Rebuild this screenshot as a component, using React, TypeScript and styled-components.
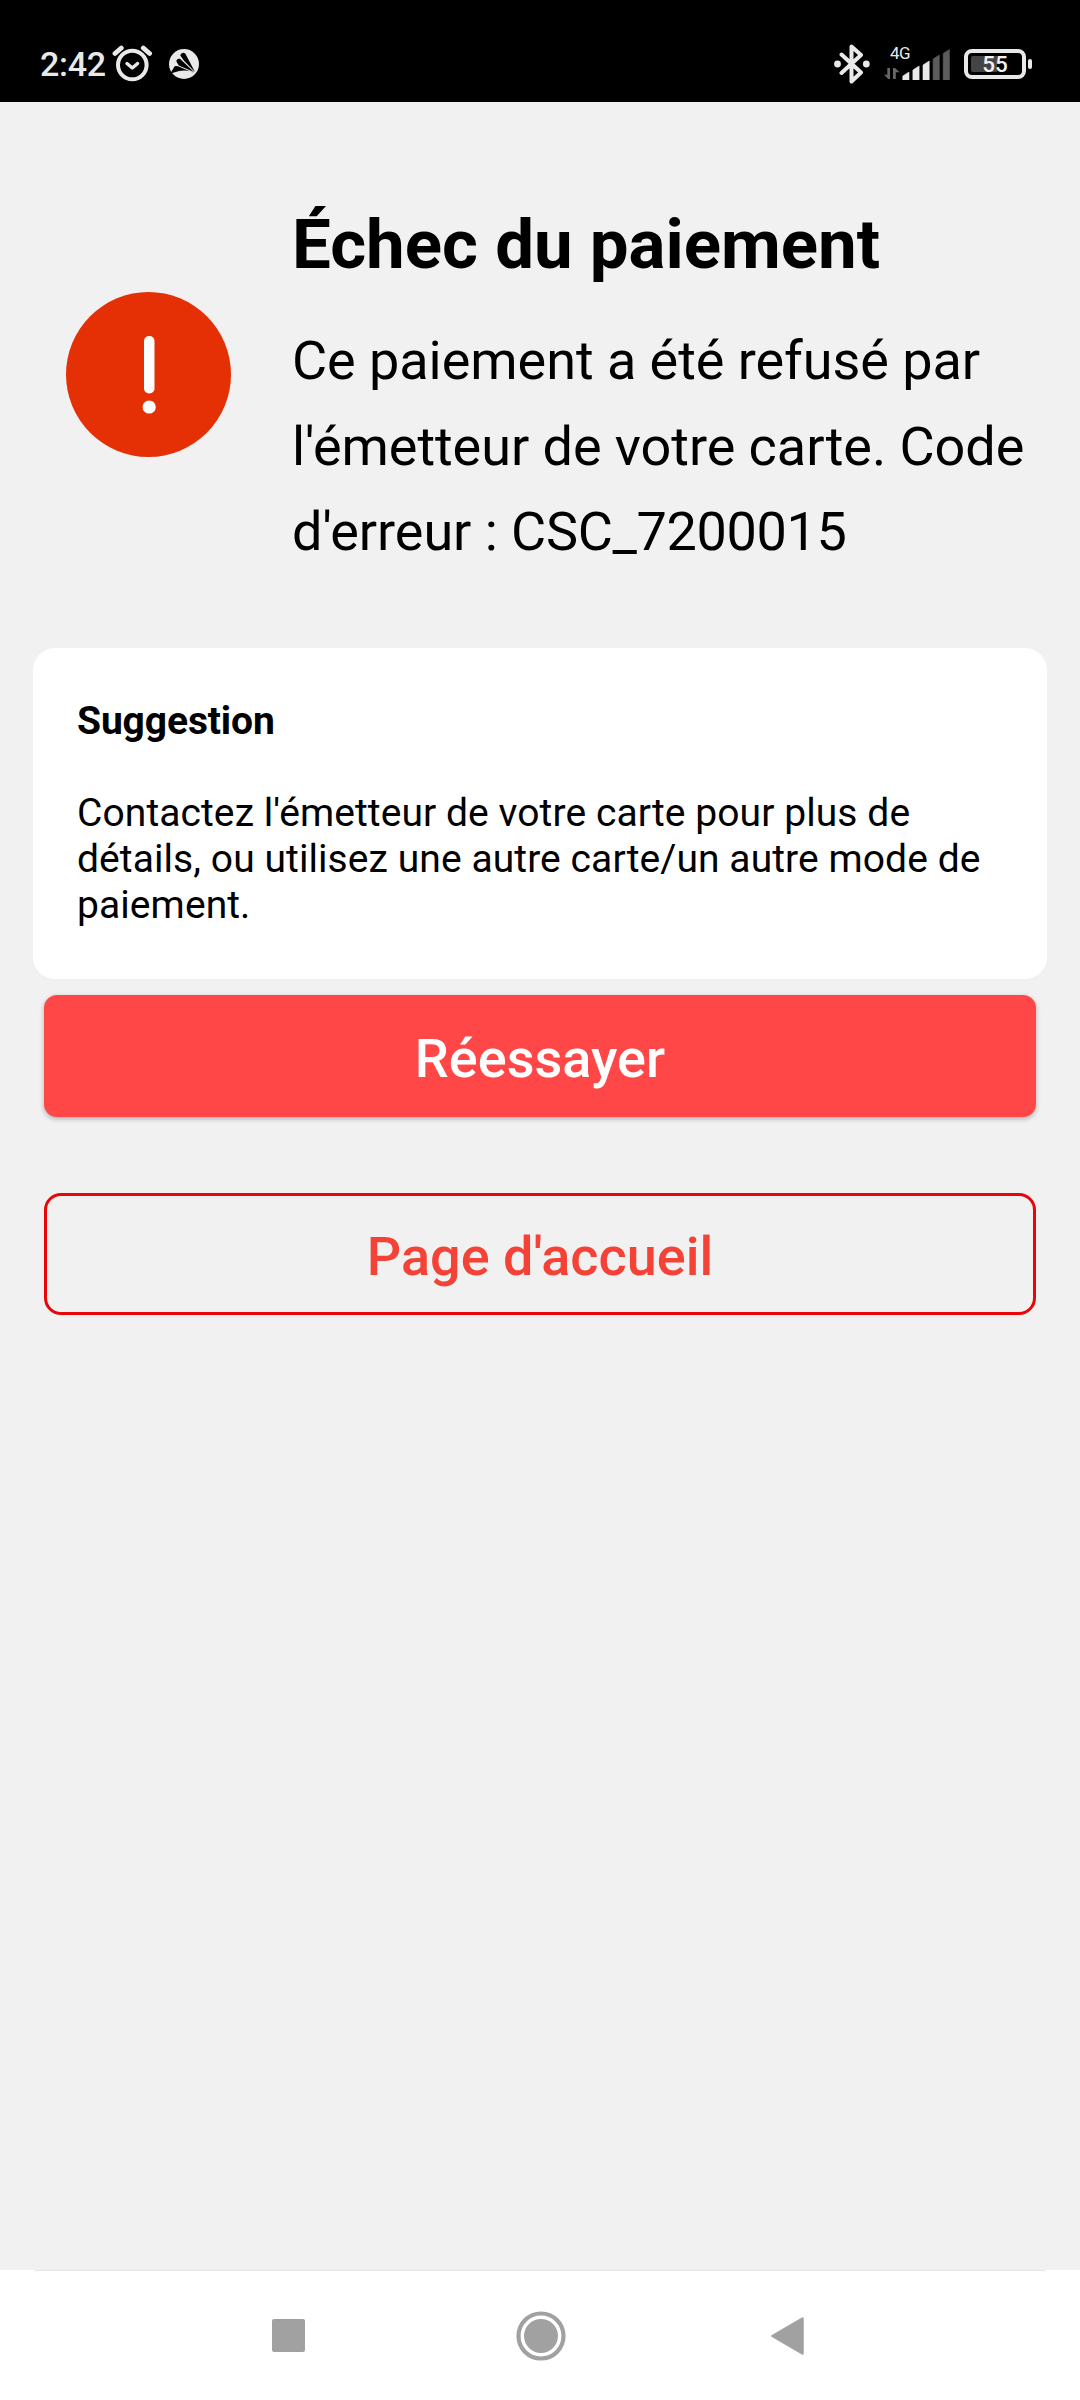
import React from "react";
import styled, { createGlobalStyle } from "styled-components";

const GlobalStyle = createGlobalStyle`
  *, *::before, *::after { box-sizing: border-box; }
  html, body { margin: 0; padding: 0; background: #f1f1f1; }
  body { font-family: Roboto, "Noto Sans", sans-serif; color: #000; }
  h1, h2, p { margin: 0; }
`;

const Screen = styled.div`
  width: 1080px;
  height: 2400px;
  display: flex;
  flex-direction: column;
  background: #f1f1f1;
  overflow: hidden;
`;

const StatusBar = styled.header`
  height: 102px;
  flex: none;
  display: flex;
  justify-content: space-between;
  align-items: flex-start;
  padding: 42px 48px 0 40px;
  background: #000;
  color: #e9e9e9;
`;

const StatusGroup = styled.div`
  display: flex;
  align-items: center;
  height: 44px;
`;

const Clock = styled.span`
  width: 72px;
  font-size: 34px;
  line-height: 44px;
  font-weight: 500;
  letter-spacing: -0.3px;
`;

const StatusIcon = styled.svg<{ $gap?: number }>`
  display: block;
  flex: none;
  margin-left: ${(p) => p.$gap ?? 0}px;
`;

/* The label spans both columns so it can sit over the short first bars. */
const Network = styled.div`
  display: grid;
  grid-template-columns: 18px 48px;
  grid-template-rows: 11px 21px;
  margin-left: 14px;
`;

const NetworkLabel = styled.span`
  grid-area: 1 / 1 / 2 / 3;
  padding-left: 6px;
  font-size: 17px;
  line-height: 11px;
  letter-spacing: -0.6px;
`;

const ArrowsIcon = styled.svg`
  grid-area: 2 / 1;
  align-self: end;
  margin-bottom: 1px;
`;

const BarsIcon = styled.svg`
  grid-area: 1 / 2 / 3 / 3;
`;

const Battery = styled.div`
  display: flex;
  align-items: center;
  margin-left: 14px;
`;

const BatteryShell = styled.div`
  width: 62px;
  height: 30px;
  padding: 3px;
  border: 4px solid #e9e9e9;
  border-radius: 8px;
`;

const BatteryLevel = styled.div<{ $level: number }>`
  height: 16px;
  display: flex;
  justify-content: center;
  border-radius: 2px;
  background: linear-gradient(to right, #444 ${(p) => p.$level}%, transparent ${(p) => p.$level}%);
  font-size: 22.5px;
  line-height: 17px;
  font-weight: 500;
  color: #f1f1f1;
`;

const BatteryTip = styled.div`
  width: 4px;
  height: 10px;
  margin-left: 2px;
  border-radius: 2px;
  background: #e9e9e9;
`;

const Content = styled.main`
  flex: 1;
  display: flex;
  flex-direction: column;
  padding: 102px 33px 0;
`;

const Failure = styled.section`
  display: flex;
  align-items: flex-start;
  height: 444px;
  padding-left: 33px;
`;

const FailureIcon = styled.svg`
  flex: none;
  margin-top: 88px;
  margin-right: 61px;
`;

const FailureText = styled.div`
  flex: 1;
`;

const Title = styled.h1`
  font-size: 69px;
  line-height: 82px;
  font-weight: 700;
  white-space: nowrap;
`;

const Message = styled.p`
  margin-top: 32px;
  font-size: 54px;
  line-height: 85.5px;
  letter-spacing: -0.05px;
  white-space: nowrap;
`;

const ErrorCode = styled.span`
  letter-spacing: -0.33px;
`;

const Card = styled.section`
  height: 331px;
  padding: 50px 44px 0;
  border-radius: 22px;
  background: #fff;
`;

const CardTitle = styled.h2`
  font-size: 39px;
  line-height: 46px;
  font-weight: 700;
  letter-spacing: -0.12px;
`;

const CardText = styled.p`
  margin-top: 46px;
  font-size: 39px;
  line-height: 46px;
  letter-spacing: 0.08px;
  white-space: nowrap;
`;

const Actions = styled.div`
  display: flex;
  flex-direction: column;
  gap: 76px;
  padding: 16px 11px 0;
`;

const Button = styled.button<{ $outlined?: boolean }>`
  height: 122px;
  padding: 5px 0 0;
  font-family: inherit;
  font-size: 54px;
  line-height: 64px;
  font-weight: 500;
  border: ${(p) => (p.$outlined ? "3px solid #ea0509" : "0")};
  border-radius: ${(p) => (p.$outlined ? 17 : 13)}px;
  color: ${(p) => (p.$outlined ? "#f44336" : "#fff")};
  background: ${(p) => (p.$outlined ? "transparent" : "#ff4747")};
  box-shadow: ${(p) => (p.$outlined ? "none" : "0 2px 5px rgba(0, 0, 0, 0.28)")};
`;

const NavBar = styled.nav`
  flex: none;
  height: 130px;
  display: flex;
  flex-direction: column;
  align-items: center;
  background: #fff;
`;

const NavEdge = styled.div`
  width: 1010px;
  height: 1px;
  background: #e4e4e4;
`;

const NavItems = styled.div`
  width: 100%;
  display: flex;
  align-items: center;
  gap: 211px;
  padding-left: 271.5px;
  height: 129px;
`;

const BackIcon = styled.svg`
  margin-left: -6px;
`;

const AlarmIcon = () => (
  <StatusIcon width="42" height="42" viewBox="0 0 42 42" fill="none" stroke="#e9e9e9" strokeWidth="4" strokeLinecap="round" strokeLinejoin="round">
    <circle cx="20.3" cy="22" r="14.3" />
    <path d="M3 10.5 9.3 5M31.3 5l6.3 5.5" strokeWidth="4.8" />
    <path d="m15 20.5 5.3 4.5 5.3-4.5" strokeWidth="3.4" />
  </StatusIcon>
);

const FanIcon = () => (
  <StatusIcon $gap={14} width="32" height="32" viewBox="0 0 32 32">
    <circle cx="16" cy="16" r="15" fill="#e9e9e9" />
    <path d="M12.3 7.5c1-3.6 5-3.5 6 0L27 24 16 12.8 12.3 7.5Z" fill="#000" />
    <path d="M8.4 13.6c0-3 3.2-3.7 5.1-1.4L26 24 10.8 17.5Z" fill="#000" />
    <path d="M5.7 20c.5-2.4 3-2.4 5-1.6L27 25.5C21 21.8 14 21.5 6 24.5L3 25.5 3.6 23.2Z" fill="#000" />
  </StatusIcon>
);

const BluetoothIcon = () => (
  <StatusIcon width="36" height="40" viewBox="0 0 36 40" fill="none" stroke="#e9e9e9" strokeWidth="4" strokeLinecap="round" strokeLinejoin="round">
    <path d="m7.5 10.500 19.500 18-9.500 9V2.500l9.500 8.500L7.500 29" />
    <circle cx="3.500" cy="20" r="3.400" fill="#e9e9e9" stroke="none" />
    <circle cx="32.300" cy="20" r="3.400" fill="#e9e9e9" stroke="none" />
  </StatusIcon>
);

const DataArrows = () => (
  <ArrowsIcon width="16" height="11" viewBox="0 0 16 11" fill="#666">
    <path d="M3.300 0H6v11H4.200L0 6.800h3.300ZM9 11V0h2l4.600 4.200h-3.800V11Z" />
  </ArrowsIcon>
);

const BARS = [8, 14, 19, 25, 30.5];

const SignalBars = () => (
  <BarsIcon width="48" height="32" viewBox="0 0 48 32">
    {BARS.map((h, i) => (
      <path
        key={h}
        d={`M${0.8 + i * 10.1} 32V${32 - h + 4}L${7 + i * 10.1} ${32 - h}V32Z`}
        fill={i < 3 ? "#e9e9e9" : "#5c5c5c"}
        stroke={i < 3 ? "#e9e9e9" : "#5c5c5c"}
        strokeWidth="0.6"
      />
    ))}
  </BarsIcon>
);

export default function App() {
  return (
    <>
      <GlobalStyle />
      <Screen>
        <StatusBar>
          <StatusGroup>
            <Clock>2:42</Clock>
            <AlarmIcon />
            <FanIcon />
          </StatusGroup>
          <StatusGroup>
            <BluetoothIcon />
            <Network>
              <NetworkLabel>4G</NetworkLabel>
              <DataArrows />
              <SignalBars />
            </Network>
            <Battery>
              <BatteryShell>
                <BatteryLevel $level={55}>55</BatteryLevel>
              </BatteryShell>
              <BatteryTip />
            </Battery>
          </StatusGroup>
        </StatusBar>

        <Content>
          <Failure>
            <FailureIcon width="165" height="165" viewBox="0 0 165 165">
              <circle cx="82.5" cy="82.5" r="82.5" fill="#e53005" />
              <rect x="78" y="44" width="10.5" height="57.5" rx="5" fill="#fff" />
              <circle cx="83.2" cy="115" r="6.6" fill="#fff" />
            </FailureIcon>
            <FailureText>
              <Title>Échec du paiement</Title>
              <Message>
                Ce paiement a été refusé par
                <br />
                l'émetteur de votre carte. Code
                <br />
                d'erreur : <ErrorCode>CSC_7200015</ErrorCode>
              </Message>
            </FailureText>
          </Failure>

          <Card>
            <CardTitle>Suggestion</CardTitle>
            <CardText>
              Contactez l'émetteur de votre carte pour plus de
              <br />
              détails, ou utilisez une autre carte/un autre mode de
              <br />
              paiement.
            </CardText>
          </Card>

          <Actions>
            <Button>Réessayer</Button>
            <Button $outlined>Page d'accueil</Button>
          </Actions>
        </Content>

        <NavBar>
          <NavEdge />
          <NavItems>
            <svg width="33" height="33" viewBox="0 0 33 33">
              <rect width="33" height="33" rx="2" fill="#a1a1a1" />
            </svg>
            <svg width="50" height="50" viewBox="0 0 50 50">
              <circle cx="25" cy="25" r="22.5" fill="none" stroke="#a1a1a1" strokeWidth="4.2" />
              <circle cx="25" cy="25" r="17" fill="#a1a1a1" />
            </svg>
            <BackIcon width="33" height="38" viewBox="0 0 33 38">
              <path d="M31.500 1.500v35L1.500 19Z" fill="#a1a1a1" stroke="#a1a1a1" strokeWidth="2.500" strokeLinejoin="round" />
            </BackIcon>
          </NavItems>
        </NavBar>
      </Screen>
    </>
  );
}
